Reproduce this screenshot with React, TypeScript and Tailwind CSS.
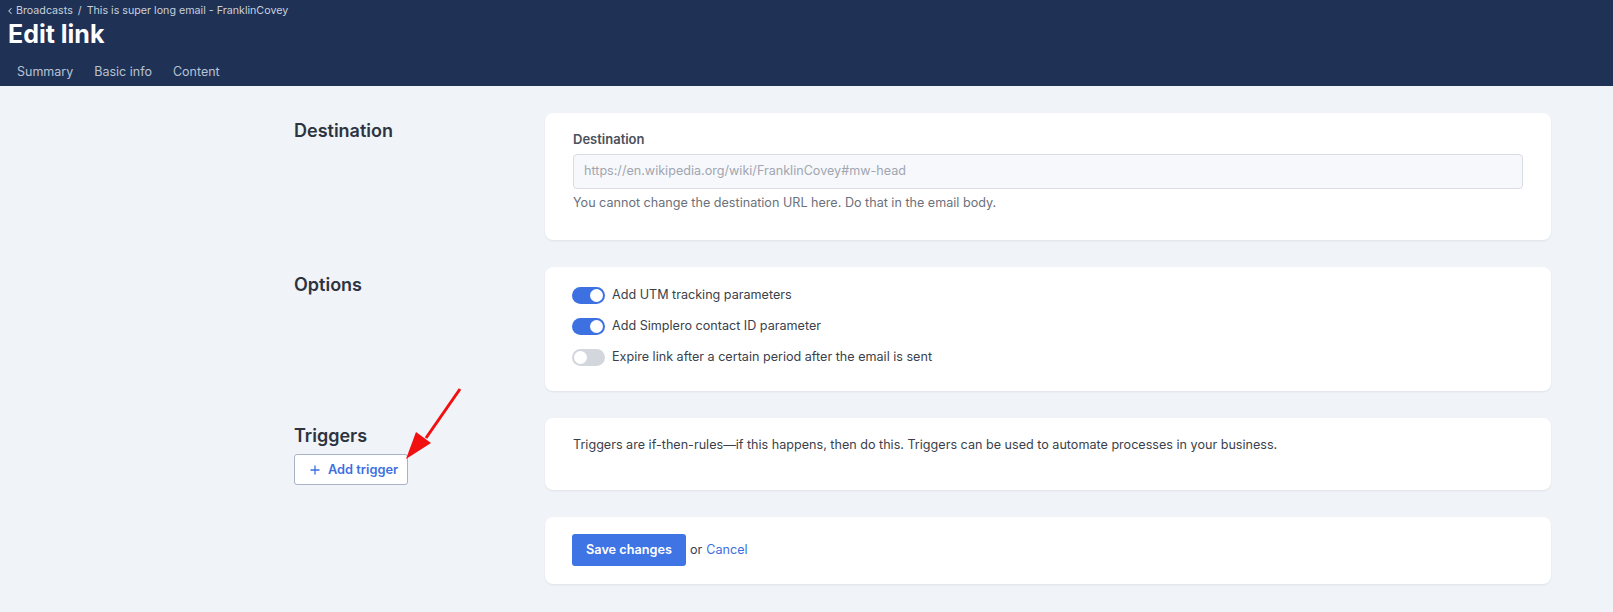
import { Plus, ChevronLeft } from 'lucide-react';

function Toggle({ on }: { on: boolean }) {
  return (
    <span
      className={
        on
          ? 'relative inline-flex h-[17px] w-[33px] shrink-0 items-center rounded-full bg-[#3d71e2]'
          : 'relative inline-flex h-[17px] w-[33px] shrink-0 items-center rounded-full bg-[#d3d6dd]'
      }
    >
      <span
        className={
          on
            ? 'absolute right-[2px] h-[13px] w-[13px] rounded-full bg-white'
            : 'absolute left-[2px] h-[13px] w-[13px] rounded-full bg-white'
        }
      />
    </span>
  );
}

function Row({ title, children, aside }: { title: string; children: React.ReactNode; aside?: React.ReactNode }) {
  return (
    <div className="flex">
      <div className="w-[251px] shrink-0 pt-1">
        <h2 className="text-[18px] font-semibold leading-7 text-[#2d3340]">{title}</h2>
        {aside}
      </div>
      <div className="flex-1 rounded-lg bg-white shadow-[0_1px_2px_rgba(30,40,70,0.08)]">{children}</div>
    </div>
  );
}

export default function App() {
  const options = [
    { label: 'Add UTM tracking parameters', on: true },
    { label: 'Add Simplero contact ID parameter', on: true },
    { label: 'Expire link after a certain period after the email is sent', on: false },
  ];

  return (
    <div className="min-h-screen bg-[#f0f3f8] font-['Inter',sans-serif] text-[12.6px] text-[#3a3f4b]">
      <header className="h-[86px] bg-[#1f3154] pt-[3px]">
        <div className="flex h-4 items-center pl-[5px] text-[10.7px] text-[#c8d0dc]">
          <ChevronLeft className="h-[10px] w-[10px]" strokeWidth={2.5} />
          <span className="ml-[1px]">Broadcasts</span>
          <span className="mx-[5px]">/</span>
          <span>This is super long email - FranklinCovey</span>
        </div>
        <h1 className="mt-[-1px] pl-2 text-[25px] font-bold leading-8 text-white">Edit link</h1>
        <nav className="mt-[12px] flex gap-[21px] pl-[17px] text-[12.5px] leading-5 text-[#b7c2d4]">
          <span>Summary</span>
          <span>Basic info</span>
          <span>Content</span>
        </nav>
      </header>

      <main className="flex flex-col gap-[27px] pb-8 pl-[294px] pr-[62px] pt-[27px]">
        <Row title="Destination">
          <div className="px-7 pb-[27px] pt-[18px]">
            <label className="block text-[13px] font-semibold leading-4 text-[#4a505c]">Destination</label>
            <div className="mt-[7px] flex h-[35px] items-center rounded border border-[#d9dce3] bg-[#f7f8fb] px-[10px] text-[#a0a6b1]">
              https://en.wikipedia.org/wiki/FranklinCovey#mw-head
            </div>
            <p className="mt-1 leading-5 text-[#6b717c]">
              You cannot change the destination URL here. Do that in the email body.
            </p>
          </div>
        </Row>

        <Row title="Options">
          <div className="flex flex-col gap-[11px] px-[27px] pb-[24px] pt-[18px]">
            {options.map((o) => (
              <div key={o.label} className="flex h-5 items-center gap-[7px]">
                <Toggle on={o.on} />
                <span>{o.label}</span>
              </div>
            ))}
          </div>
        </Row>

        <Row
          title="Triggers"
          aside={
            <div className="relative">
              <button className="mt-1 flex h-[31px] w-[114px] items-center gap-[6px] rounded-[3px] border border-[#a9b3c6] bg-white pl-[13px] text-[12.8px] font-semibold text-[#3d6fe0]">
                <Plus className="h-[14px] w-[14px]" strokeWidth={2.25} />
                Add trigger
              </button>
              <svg className="absolute left-[110px] top-[-68px]" width="60" height="80" viewBox="0 0 60 80">
                <line x1="56" y1="3" x2="22" y2="52" stroke="#f20f0f" strokeWidth="3" />
                <polygon points="2,73 12,46 27,57" fill="#f20f0f" />
              </svg>
            </div>
          }
        >
          <p className="px-7 pb-[35px] pt-[17px] leading-5">
            Triggers are if-then-rules—if this happens, then do this. Triggers can be used to automate processes in your business.
          </p>
        </Row>

        <Row title="">
          <div className="flex items-center gap-[4px] px-[27px] pb-[18px] pt-[17px]">
            <button className="h-8 w-[114px] rounded-[3px] bg-[#3e74e4] text-[12.7px] font-semibold text-white">
              Save changes
            </button>
            <span>or</span>
            <a className="text-[#3d6fe0]">Cancel</a>
          </div>
        </Row>
      </main>
    </div>
  );
}
